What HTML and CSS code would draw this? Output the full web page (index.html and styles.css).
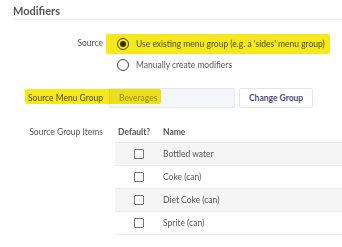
FILE: index.html
```html
<!DOCTYPE html>
<html lang="en">
  <head>
    <meta charset="UTF-8" />
    <title>Modifiers</title>
    <link rel="stylesheet" href="styles.css">
  </head>
  <body>
    <main>
      <h2 class="page-title">Modifiers</h2>

      <div class="field field-source">
        <span class="mark mark-source"></span>
        <p class="field-name">Source</p>
        <div class="options">
          <label class="option">
            <span class="radio checked"></span>
            Use existing menu group (e.g. a 'sides' menu group)
          </label>
          <label class="option">
            <span class="radio"></span>
            Manually create modifiers
          </label>
        </div>
      </div>

      <div class="field field-group">
        <span class="mark mark-group"></span>
        <p class="field-name">Source Menu Group</p>
        <div class="group-controls">
          <input class="form-input" type="text" placeholder="Beverages" />
          <button class="change-button" type="button">Change Group</button>
        </div>
      </div>

      <div class="field field-items">
        <p class="field-name">Source Group Items</p>
        <table class="items-table">
          <thead>
            <tr>
              <th class="col-default">Default?</th>
              <th>Name</th>
            </tr>
          </thead>
          <tbody>
            <tr class="shaded">
              <td class="col-default"><span class="checkbox"></span></td>
              <td>Bottled water</td>
            </tr>
            <tr>
              <td class="col-default"><span class="checkbox"></span></td>
              <td>Coke (can)</td>
            </tr>
            <tr class="shaded">
              <td class="col-default"><span class="checkbox"></span></td>
              <td>Diet Coke (can)</td>
            </tr>
            <tr>
              <td class="col-default"><span class="checkbox"></span></td>
              <td>Sprite (can)</td>
            </tr>
          </tbody>
        </table>
      </div>
    </main>
  </body>
</html>
```

FILE: styles.css
```css
* {
  box-sizing: border-box;
}
body {
  margin: 0;
  font-family: Lato, "Liberation Sans", sans-serif;
  font-size: 8.5px;
  color: #555;
  background: #fff;
}
main {
  padding-left: 13px;
}

.page-title {
  margin: 0;
  padding: 4px 0 1px;
  font-size: 11px;
  line-height: 14px;
  font-weight: 700;
  color: #555;
  border-bottom: 1px solid #e8e8e8;
}

.field {
  position: relative;
  display: grid;
  grid-template-columns: 90px 1fr;
  column-gap: 4px;
}
.field-name {
  margin: 0;
  text-align: right;
  line-height: 20px;
}

/* yellow marker strokes drawn over the form */
.mark {
  position: absolute;
  background: #f6e81c;
  mix-blend-mode: multiply;
  border-radius: 2px;
}

.field-source {
  margin-top: 13px;
}
.field-source .field-name {
  line-height: 21px;
}
.mark-source {
  left: 93px;
  top: 1px;
  width: 224px;
  height: 20px;
}
.options {
  padding-left: 10px;
}
.option {
  display: flex;
  align-items: center;
  gap: 7px;
  height: 21px;
}
.radio {
  width: 12px;
  height: 12px;
  border: 1px solid #444;
  border-radius: 50%;
  display: flex;
  align-items: center;
  justify-content: center;
  background: #fff;
}
.radio.checked::after {
  content: "";
  width: 6px;
  height: 6px;
  border-radius: 50%;
  background: #333;
}

.field-group {
  margin-top: 13px;
}
.mark-group {
  left: 12px;
  top: 1px;
  width: 136px;
  height: 15px;
}
.group-controls {
  display: flex;
  gap: 4px;
  padding-left: 2px;
}
.form-input {
  width: 126px;
  height: 20px;
  border: 1px solid #e4e7eb;
  background: #f4f6f9;
  border-radius: 2px;
  padding: 0 9px;
  font: inherit;
  color: #555;
}
.form-input::placeholder {
  color: #9a9a9a;
}
.change-button {
  height: 20px;
  padding: 0 9px;
  background: #fff;
  border: 1px solid #e6e6e6;
  border-radius: 2px;
  font-family: inherit;
  font-size: 8.5px;
  font-weight: 700;
  color: #4a4e78;
}

.field-items {
  margin-top: 14px;
}
.items-table {
  margin-left: 8px;
  width: calc(100% - 8px);
  border-collapse: collapse;
}
.items-table th {
  text-align: left;
  font-weight: 700;
  height: 20px;
  padding: 0;
  border-bottom: 1px solid #e6e6e6;
}
.items-table td {
  height: 23px;
  padding: 0;
  border-bottom: 1px solid #ececec;
}
.items-table .col-default {
  width: 48px;
  padding-left: 3px;
}
.items-table td.col-default {
  text-align: center;
  padding-left: 0;
}
.shaded td {
  background: #f5f5f5;
}
.checkbox {
  display: inline-block;
  width: 10px;
  height: 10px;
  border: 1px solid #777;
  border-radius: 1px;
  background: #fff;
  vertical-align: middle;
}
```
